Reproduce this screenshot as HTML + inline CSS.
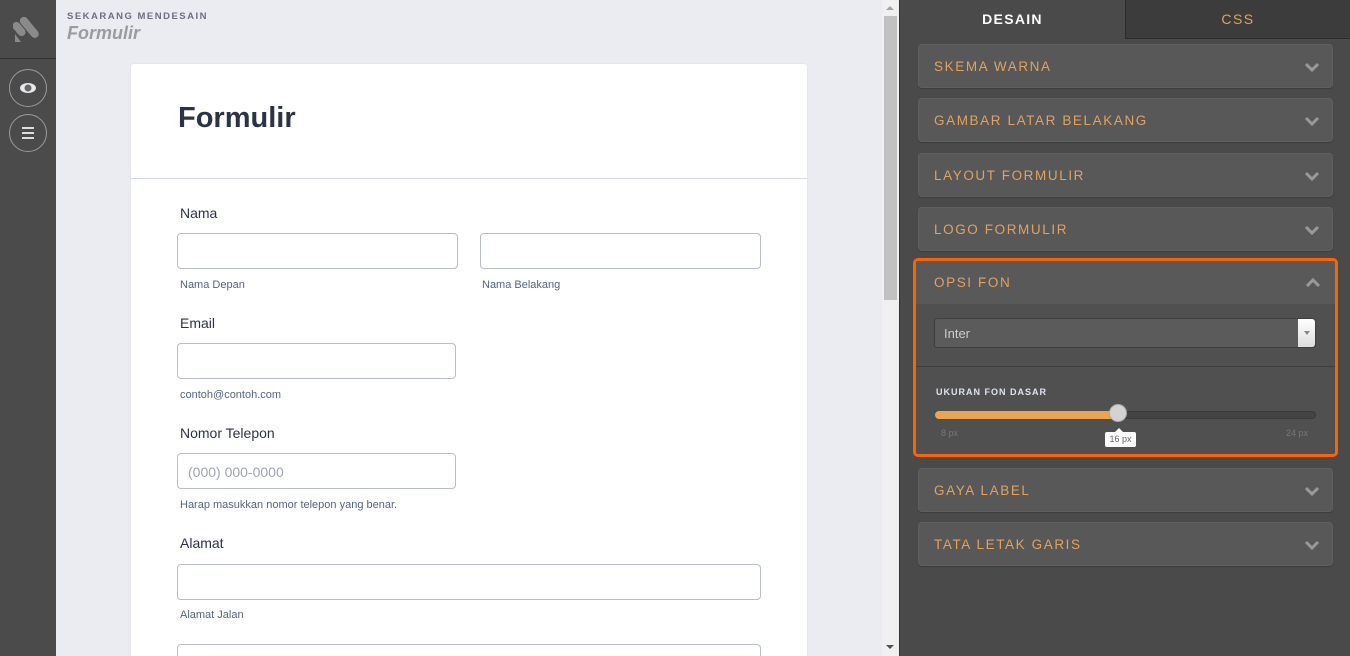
<!DOCTYPE html>
<html><head><meta charset="utf-8"><style>
*{box-sizing:border-box;margin:0;padding:0}
html,body{width:1350px;height:656px;overflow:hidden}
body{position:relative;font-family:"Liberation Sans",sans-serif;background:#ebecf1}
.abs{position:absolute}
.side{left:0;top:0;width:56px;height:656px;background:#4b4b4b}
.circ{position:absolute;left:9px;width:38px;height:38px;border:1px solid #9a9a9a;border-radius:50%}
.card{left:131px;top:64px;width:676px;height:592px;background:#fff;border-radius:3px 3px 0 0;box-shadow:0 0 2px rgba(0,0,0,.08);overflow:hidden}
.lab{position:absolute;font-size:14px;color:#2c3345}
.inp{position:absolute;height:36px;border:1px solid #b8bdc9;border-radius:4px;background:#fff}
.sub{position:absolute;font-size:11px;color:#57647e}
.panel{left:899px;top:0;width:451px;height:656px;background:#4a4a4a;border-left:1px solid #333}
.acc{position:absolute;left:918px;width:415px;height:44px;background:#585858;border:1px solid #5f5f5f;border-radius:4px;box-shadow:0 1px 1px rgba(0,0,0,.2)}
.acc span,.hd span{position:absolute;left:15px;top:14px;font-size:13.5px;letter-spacing:1.6px;color:#e0a25e}
.chev{position:absolute;right:12px;top:17px;width:16px;height:10px}
</style></head><body>
<div class="abs side">
 <svg class="abs" style="left:13px;top:12px" width="30" height="32" viewBox="0 0 30 32"><g fill="#8a8a8a"><rect x="2" y="9" width="8" height="16" rx="4" transform="rotate(-40 6 17)"/><rect x="12" y="3" width="8" height="25" rx="4" transform="rotate(-40 16 15)"/><polygon points="2,22 2,30 8,30"/></g></svg>
 <div class="abs" style="left:0;top:58px;width:56px;height:1px;background:#333"></div>
 <div class="circ" style="top:69px"><svg width="36" height="36" viewBox="0 0 36 36"><ellipse cx="18" cy="18" rx="8" ry="5" fill="#e8e8ee"/><circle cx="18" cy="18" r="3.5" fill="#666"/></svg></div>
 <div class="circ" style="top:114px"><svg width="36" height="36" viewBox="0 0 36 36"><g stroke="#ddd" stroke-width="2"><line x1="12" y1="13" x2="24" y2="13"/><line x1="12" y1="18" x2="24" y2="18"/><line x1="12" y1="23" x2="24" y2="23"/></g></svg></div>
</div>
<div class="abs" style="left:67px;top:11px;font-size:9.5px;letter-spacing:1.5px;color:#6b6f80;font-weight:bold">SEKARANG MENDESAIN</div>
<div class="abs" style="left:67px;top:23px;font-size:18px;font-style:italic;font-weight:bold;color:#9a9ba3">Formulir</div>
<div class="abs card">
 <div class="abs" style="left:47px;top:38px;font-size:29px;font-weight:bold;color:#2c3345">Formulir</div>
 <div class="abs" style="left:0;top:114px;width:676px;height:1px;background:#d8dae3"></div>
 <div class="lab" style="left:49px;top:141px">Nama</div>
 <div class="inp" style="left:46px;top:169px;width:281px"></div>
 <div class="inp" style="left:349px;top:169px;width:281px"></div>
 <div class="sub" style="left:49px;top:215px">Nama Depan</div>
 <div class="sub" style="left:351px;top:215px">Nama Belakang</div>
 <div class="lab" style="left:49px;top:251px">Email</div>
 <div class="inp" style="left:46px;top:279px;width:279px"></div>
 <div class="sub" style="left:49px;top:325px">contoh@contoh.com</div>
 <div class="lab" style="left:49px;top:361px">Nomor Telepon</div>
 <div class="inp" style="left:46px;top:389px;width:279px;padding:10px;font-size:14px;color:#9fa4b2">(000) 000-0000</div>
 <div class="sub" style="left:49px;top:435px">Harap masukkan nomor telepon yang benar.</div>
 <div class="lab" style="left:49px;top:471px">Alamat</div>
 <div class="inp" style="left:46px;top:500px;width:584px"></div>
 <div class="sub" style="left:49px;top:545px">Alamat Jalan</div>
 <div class="inp" style="left:46px;top:580px;width:584px"></div>
</div>
<div class="abs" style="left:882px;top:0;width:17px;height:656px;background:#f0f0f0"></div>
<div class="abs" style="left:884px;top:16px;width:13px;height:284px;background:#c1c1c1"></div>
<div class="abs" style="left:886px;top:6px;width:0;height:0;border-left:4px solid transparent;border-right:4px solid transparent;border-bottom:4px solid #a3a3a3"></div>
<div class="abs" style="left:886px;top:645px;width:0;height:0;border-left:4px solid transparent;border-right:4px solid transparent;border-top:4px solid #505050"></div>
<div class="abs panel"></div>
<div class="abs" style="left:900px;top:0;width:225px;height:39px;background:#4a4a4a;color:#fff;font-weight:bold;font-size:14px;letter-spacing:1.3px;text-align:center;line-height:38px">DESAIN</div>
<div class="abs" style="left:1125px;top:0;width:225px;height:39px;background:#3c3c3c;border-left:1px solid #2a2a2a;border-bottom:1px solid #2a2a2a;color:#e0a25e;font-size:14px;letter-spacing:1.5px;text-align:center;line-height:38px">CSS</div>
<div class="acc" style="top:44px"><span>SKEMA WARNA</span><svg class="chev" viewBox="0 0 16 10"><path d="M2 2l6 6 6-6" stroke="#999" stroke-width="3" fill="none"/></svg></div>
<div class="acc" style="top:98px"><span>GAMBAR LATAR BELAKANG</span><svg class="chev" viewBox="0 0 16 10"><path d="M2 2l6 6 6-6" stroke="#999" stroke-width="3" fill="none"/></svg></div>
<div class="acc" style="top:153px"><span>LAYOUT FORMULIR</span><svg class="chev" viewBox="0 0 16 10"><path d="M2 2l6 6 6-6" stroke="#999" stroke-width="3" fill="none"/></svg></div>
<div class="acc" style="top:207px"><span>LOGO FORMULIR</span><svg class="chev" viewBox="0 0 16 10"><path d="M2 2l6 6 6-6" stroke="#999" stroke-width="3" fill="none"/></svg></div>
<div class="abs" style="left:913px;top:258px;width:425px;height:199px;border:3px solid #ff6200;border-radius:5px;background:#505050;overflow:hidden">
 <div class="hd abs" style="left:0;top:0;width:419px;height:43px;background:#595959"><span style="top:14px;left:18px">OPSI FON</span><svg class="chev" style="right:14px;top:17px" viewBox="0 0 16 10"><path d="M2 8l6-6 6 6" stroke="#999" stroke-width="3" fill="none"/></svg></div>
 <div class="abs" style="left:18px;top:57px;width:382px;height:30px;background:#5b5b5b;border:1px solid #3f3f3f;border-radius:3px;color:#ccc;font-size:13px;padding:7px 9px">Inter</div>
 <div class="abs" style="left:382px;top:58px;width:17px;height:28px;background:linear-gradient(#fff,#ddd);border-radius:0 3px 3px 0"></div>
 <div class="abs" style="left:388px;top:70px;border-left:3px solid transparent;border-right:3px solid transparent;border-top:4px solid #888"></div>
 <div class="abs" style="left:0;top:105px;width:419px;height:1px;background:#3e3e3e"></div>
 <div class="abs" style="left:20px;top:126px;font-size:9px;letter-spacing:1px;color:#dfe3ee;font-weight:bold">UKURAN FON DASAR</div>
 <div class="abs" style="left:19px;top:150px;width:381px;height:8px;background:#444;border:1px solid #3a3a3a;border-radius:4px"></div>
 <div class="abs" style="left:19px;top:150px;width:185px;height:8px;background:#eca54e;border-radius:4px 0 0 4px"></div>
 <div class="abs" style="left:193px;top:143px;width:18px;height:18px;border-radius:50%;background:#d3d3d3;border:1px solid #aaa"></div>
 <div class="abs" style="left:25px;top:167px;font-size:9px;color:#777">8 px</div>
 <div class="abs" style="left:370px;top:167px;font-size:9px;color:#777">24 px</div>
 <div class="abs" style="left:199px;top:167px;border-left:4px solid transparent;border-right:4px solid transparent;border-bottom:4px solid #fff"></div>
 <div class="abs" style="left:189px;top:171px;width:31px;height:15px;background:#fff;border-radius:2px;font-size:9px;color:#666;text-align:center;line-height:15px">16 px</div>
</div>
<div class="acc" style="top:468px"><span>GAYA LABEL</span><svg class="chev" viewBox="0 0 16 10"><path d="M2 2l6 6 6-6" stroke="#999" stroke-width="3" fill="none"/></svg></div>
<div class="acc" style="top:522px"><span>TATA LETAK GARIS</span><svg class="chev" viewBox="0 0 16 10"><path d="M2 2l6 6 6-6" stroke="#999" stroke-width="3" fill="none"/></svg></div>
</body></html>
